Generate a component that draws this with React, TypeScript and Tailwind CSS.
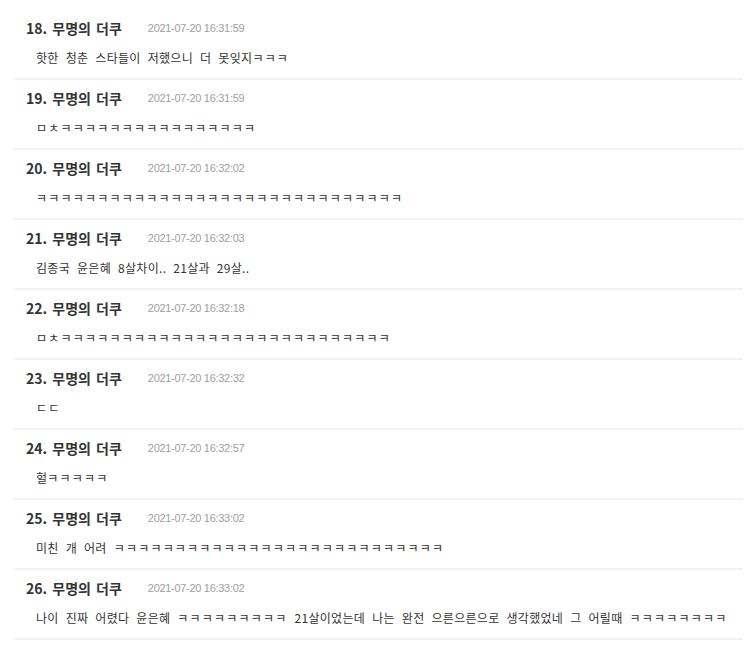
import type { ReactNode } from "react";

type Comment = {
  no: number;
  date: string;
  body: ReactNode;
};

// jamo runs render a bit wider in the original, so they get their own spacing
const K = ({ n, pre = "" }: { n: number; pre?: string }) => (
  <span className="tracking-[1.2px]">{pre + "ㅋ".repeat(n)}</span>
);

const COMMENTS: Comment[] = [
  { no: 18, date: "2021-07-20 16:31:59", body: <>핫한 청춘 스타들이 저했으니 더 못잊지<K n={3} /></> },
  { no: 19, date: "2021-07-20 16:31:59", body: <K pre="ㅁㅊ" n={16} /> },
  { no: 20, date: "2021-07-20 16:32:02", body: <K n={30} /> },
  { no: 21, date: "2021-07-20 16:32:03", body: "김종국 윤은혜 8살차이.. 21살과 29살.." },
  { no: 22, date: "2021-07-20 16:32:18", body: <K pre="ㅁㅊ" n={27} /> },
  { no: 23, date: "2021-07-20 16:32:32", body: <K pre="ㄷㄷ" n={0} /> },
  { no: 24, date: "2021-07-20 16:32:57", body: <>헐<K n={5} /></> },
  { no: 25, date: "2021-07-20 16:33:02", body: <>미친 개 어려 <K n={27} /></> },
  {
    no: 26,
    date: "2021-07-20 16:33:02",
    body: (
      <>
        나이 진짜 어렸다 윤은혜 <K n={9} /> 21살이었는데 나는 완전 으른으른으로 생각했었네 그 어릴때 <K n={8} />
      </>
    ),
  },
];

function CommentRow({ c }: { c: Comment }) {
  return (
    <li className="border-b-2 border-[#f2f2f2] pt-[8px] pb-[10px]">
      <div className="flex h-[20px] items-center pl-[12px]">
        <span className="font-['Noto_Sans_CJK_KR',sans-serif] text-[14px] font-bold text-[#333] [word-spacing:2px]">
          {c.no}. 무명의 더쿠
        </span>
        <span className="ml-[26px] font-['Liberation_Sans',sans-serif] text-[11px] tracking-[-0.3px] text-[#a0a0a0]">
          {c.date}
        </span>
      </div>
      <p className="mt-[10px] h-[20px] pl-[22px] font-['Noto_Sans_CJK_KR',sans-serif] text-[12px] leading-[20px] tracking-[0.3px] text-[#333] whitespace-nowrap [word-spacing:4px]">
        {c.body}
      </p>
    </li>
  );
}

export default function App() {
  return (
    <div className="min-h-screen bg-white pt-[10px] pl-[14px] pr-[3px]">
      <ul>
        {COMMENTS.map((c) => (
          <CommentRow key={c.no} c={c} />
        ))}
      </ul>
    </div>
  );
}
